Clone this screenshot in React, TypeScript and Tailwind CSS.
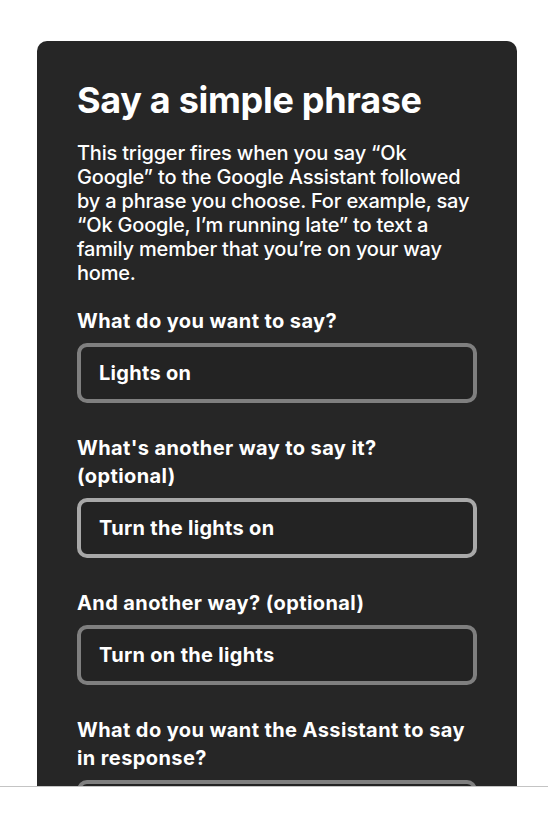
const FONT = { fontFamily: '"Inter", "Open Sans", sans-serif' };

function Field({
  label,
  value,
  active,
}: {
  label: React.ReactNode;
  value: string;
  active?: boolean;
}) {
  return (
    <div className="mt-[31px]">
      <label className="block text-[20px] font-bold leading-[28px] tracking-[0.4px] text-white">
        {label}
      </label>
      <div
        className={`mt-[8px] flex h-[60px] items-center rounded-[10px] border-4 bg-[#232323] px-[18px] ${
          active ? "border-[#a8a8a8]" : "border-[#7f7f7f]"
        }`}
      >
        <span className="text-[20px] font-bold tracking-[0.3px] text-white">
          {value}
        </span>
      </div>
    </div>
  );
}

export default function App() {
  return (
    <div className="min-h-[813px] bg-white" style={FONT}>
      <div className="mx-[37px] mt-[41px] w-[480px] rounded-t-[10px] bg-[#262626] px-[40px] pb-[60px] pt-[39px]">
        <h1 className="whitespace-nowrap text-[36px] font-bold leading-[40px] tracking-[-0.3px] text-white">
          Say a simple phrase
        </h1>
        <p className="mt-[21px] whitespace-nowrap text-[20px] font-medium leading-[24px] tracking-[-0.2px] text-white">
          This trigger fires when you say “Ok
          <br />
          Google” to the Google Assistant followed
          <br />
          by a phrase you choose. For example, say
          <br />
          “Ok Google, I’m running late” to text a
          <br />
          family member that you’re on your way
          <br />
          home.
        </p>

        <div className="-mt-[9px]">
          <Field label="What do you want to say?" value="Lights on" />
        </div>
        <Field
          label={
            <>
              What's another way to say it?
              <br />
              (optional)
            </>
          }
          value="Turn the lights on"
          active
        />
        <Field label="And another way? (optional)" value="Turn on the lights" />
        <Field
          label={
            <>
              What do you want the Assistant to say
              <br />
              in response?
            </>
          }
          value=""
        />
      </div>

      <div className="fixed inset-x-0 bottom-0 h-[27px] border-t border-[#c4c4c4] bg-white" />
    </div>
  );
}
